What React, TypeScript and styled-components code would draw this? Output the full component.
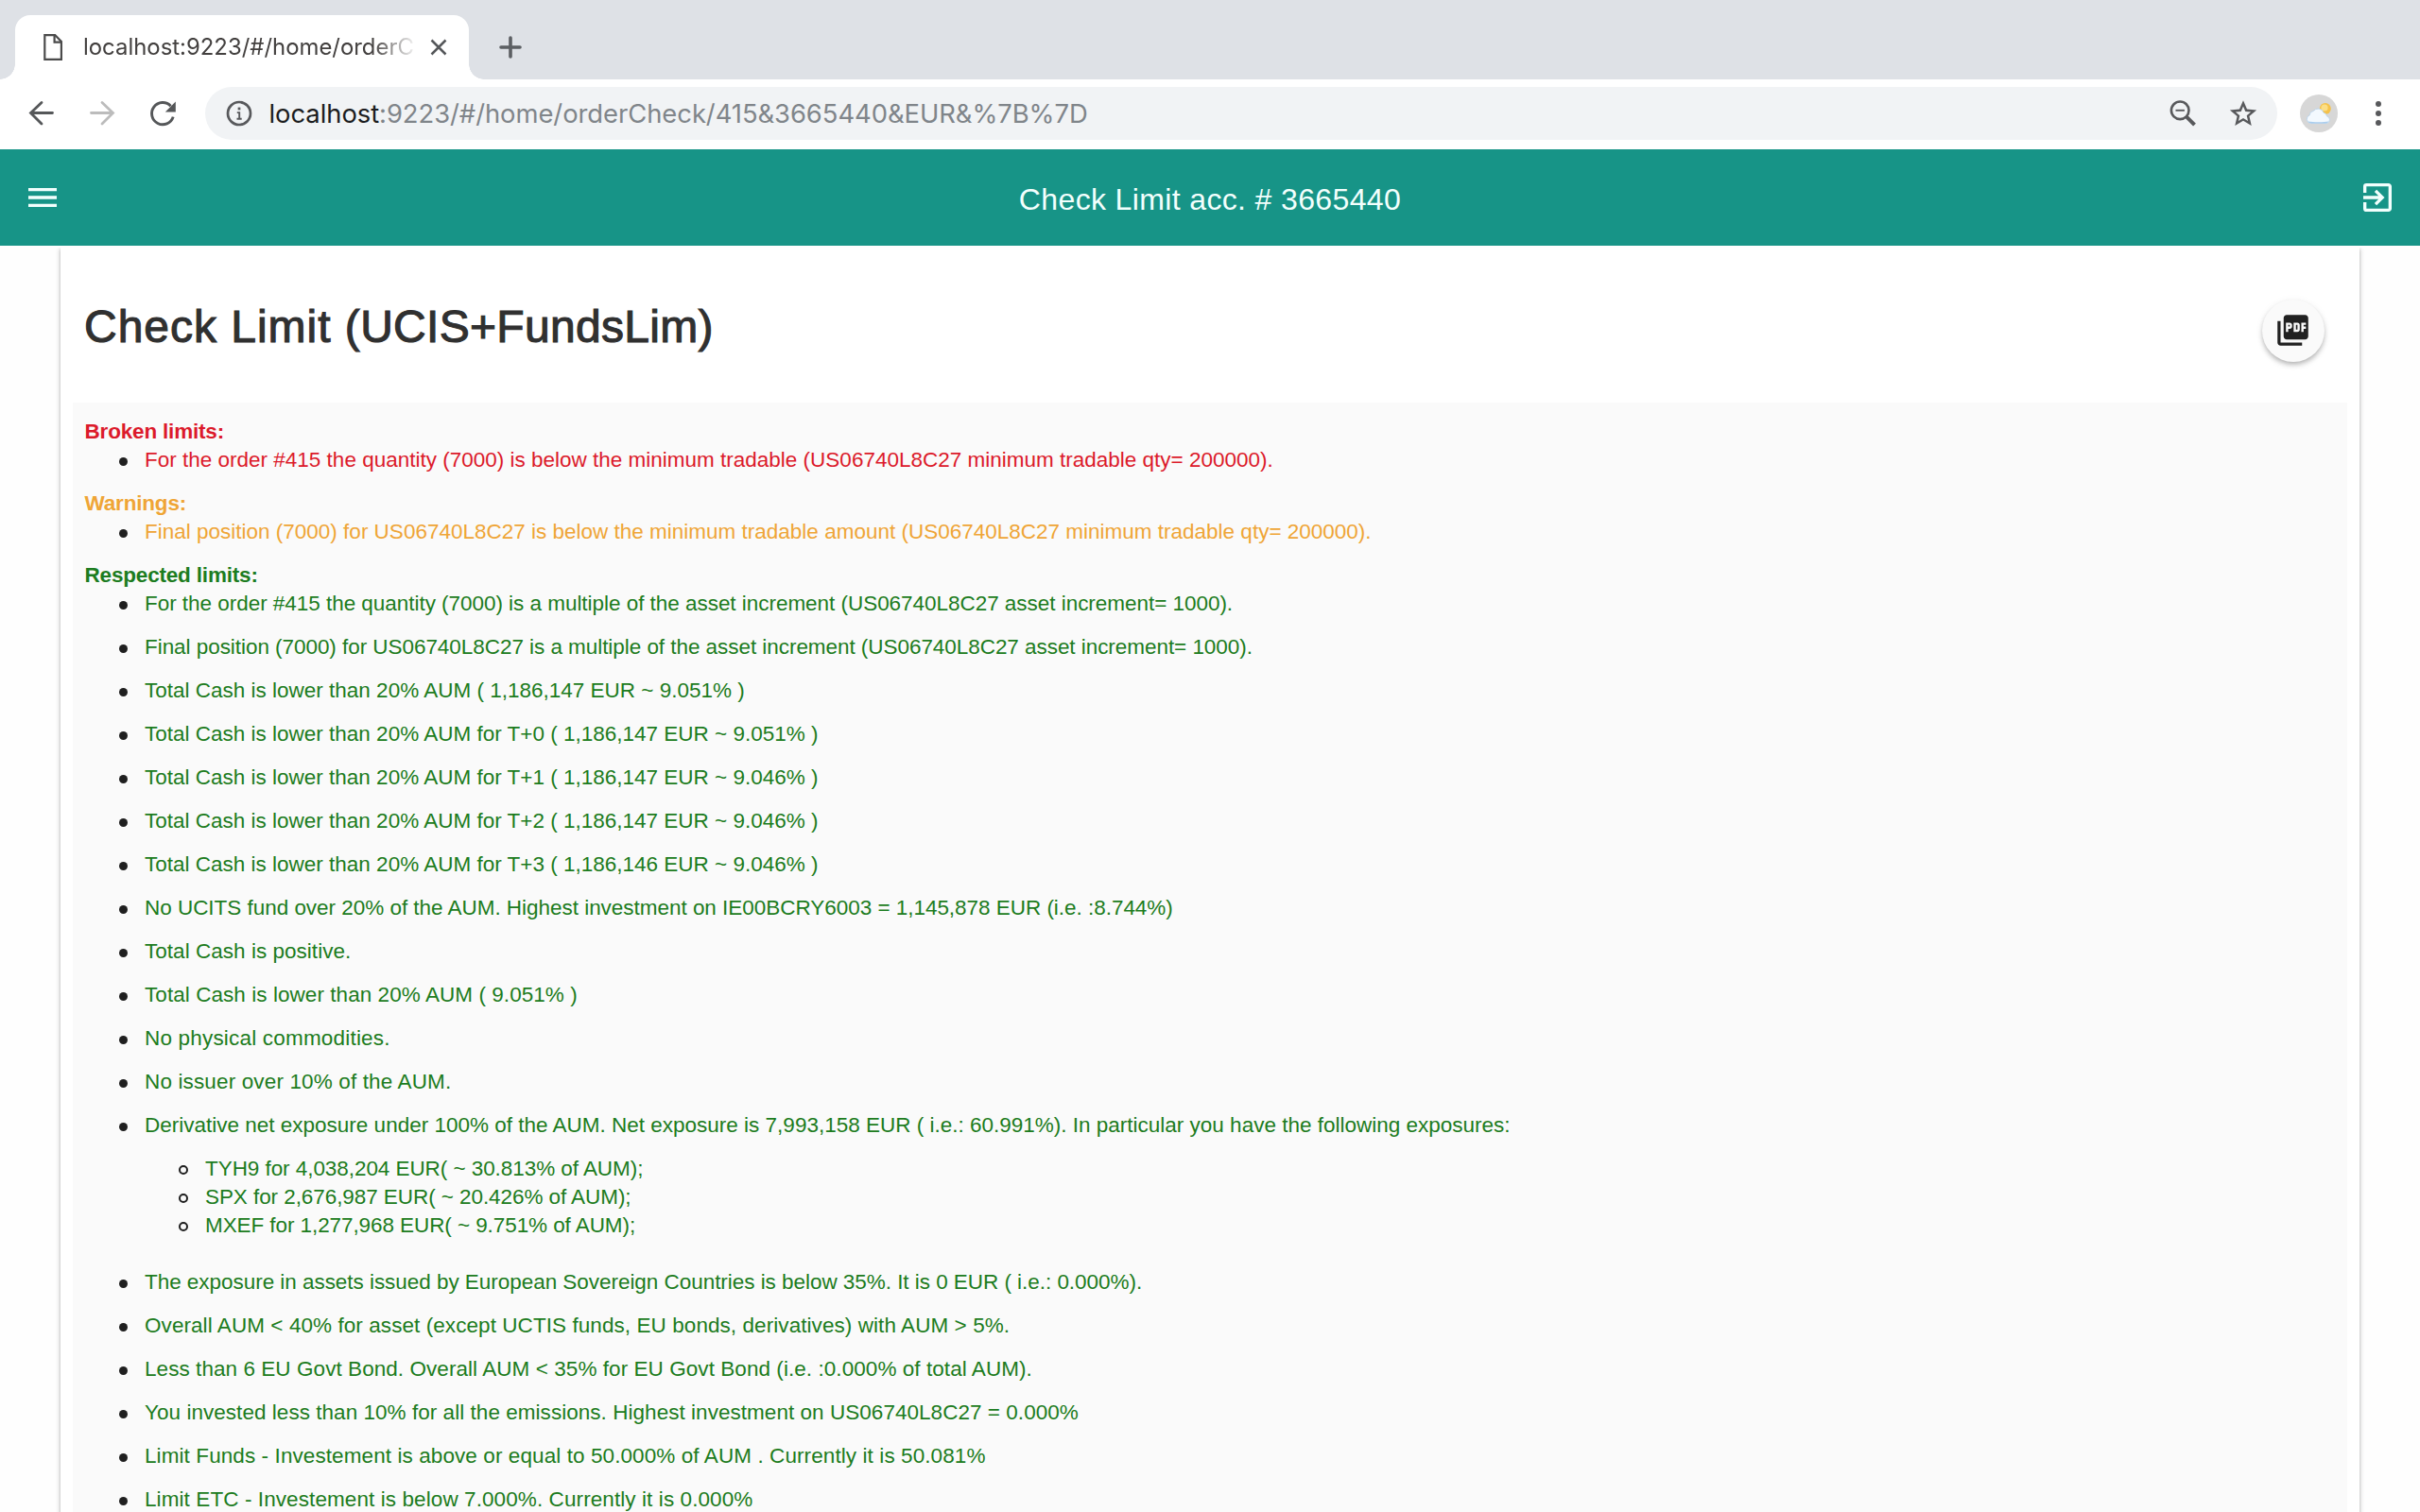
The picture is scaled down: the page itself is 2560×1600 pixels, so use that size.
import React from 'react';
import styled, { createGlobalStyle } from 'styled-components';
import { MdExitToApp, MdMenu, MdPictureAsPdf } from 'react-icons/md';

const GlobalStyle = createGlobalStyle`
  html, body { margin: 0; height: 1600px; overflow: hidden; background: #fff; }
  *, *::before, *::after { box-sizing: border-box; }
`;

const Page = styled.div`
  display: flex;
  flex-direction: column;
  width: 2560px;
  height: 1600px;
  overflow: hidden;
  background: #fefefe;
  font-family: 'Liberation Sans', Arial, sans-serif;
`;

const TabStrip = styled.div`
  flex: none;
  display: flex;
  height: 84px;
  padding: 16px 0 0 16px;
  background: #dee1e6;
`;

const Tab = styled.div`
  position: relative;
  display: flex;
  align-items: center;
  width: 480px;
  height: 68px;
  padding: 0 23px 0 29px;
  background: #fff;
  border-radius: 16px 16px 0 0;

  &::before,
  &::after {
    content: '';
    position: absolute;
    bottom: 0;
    width: 16px;
    height: 16px;
  }
  &::before {
    left: -16px;
    background: radial-gradient(circle at 0 0, transparent 15.5px, #fff 16px);
  }
  &::after {
    right: -16px;
    background: radial-gradient(circle at 100% 0, transparent 15.5px, #fff 16px);
  }
`;

const TabTitle = styled.span`
  width: 350px;
  margin-left: 21px;
  overflow: hidden;
  white-space: nowrap;
  font: 23.9px/32px Inter, sans-serif;
  color: #43403f;
  mask-image: linear-gradient(to right, #000 305px, transparent 354px);
`;

const TabClose = styled.svg`
  margin-left: 17px;
`;

const NewTab = styled.button`
  display: flex;
  align-items: center;
  margin: 0 0 0 30px;
  padding: 0;
  border: 0;
  background: none;
  color: #5c5f63;
`;

const Toolbar = styled.div`
  flex: none;
  display: flex;
  align-items: center;
  height: 73.5px;
  padding: 0 34px 2px 28px;
  background: #fff;
`;

const NavIcon = styled.svg<{ $dim?: boolean }>`
  flex: none;
  margin-right: 32px;
  color: ${(p) => (p.$dim ? '#bcbcbc' : '#555759')};
`;

const Omnibox = styled.div`
  display: flex;
  align-items: center;
  width: 2192px;
  height: 56px;
  margin-left: -3px;
  padding: 0 20px 0 20px;
  border-radius: 28px;
  background: #f1f3f5;
  color: #58595c;
`;

const Url = styled.span`
  flex: 1;
  margin-left: 15.5px;
  font: 27.4px/36px Inter, sans-serif;
  letter-spacing: -0.05px;
  color: #80858a;
`;

const UrlHost = styled.span`
  color: #1c1d20;
`;

const OmniAction = styled.svg`
  flex: none;
  margin-left: 32px;
`;

const Avatar = styled.div`
  display: flex;
  align-items: center;
  justify-content: center;
  flex: none;
  width: 40px;
  height: 40px;
  margin-left: 24px;
  border-radius: 50%;
  background: #d7d7d7;
`;

const Kebab = styled.div`
  display: flex;
  flex-direction: column;
  gap: 4px;
  margin-left: auto;
  padding-right: 7px;
`;

const Dot = styled.i`
  width: 6px;
  height: 6px;
  border-radius: 50%;
  background: #58595c;
`;

const AppBar = styled.header`
  flex: none;
  display: flex;
  align-items: center;
  justify-content: space-between;
  height: 102.5px;
  padding: 0 25px;
  background: #179487;
  color: #f2fffd;
`;

const AppTitle = styled.h2`
  margin: 6px 0 0;
  font-size: 32px;
  font-weight: 400;
  letter-spacing: 0.36px;
`;

const Card = styled.main`
  flex: 1;
  min-height: 0;
  margin: 2px 64px -20px;
  padding: 0 13px;
  background: #fff;
  box-shadow: 0 3px 1px -2px rgba(0, 0, 0, 0.2), 0 2px 2px rgba(0, 0, 0, 0.14),
    0 1px 5px rgba(0, 0, 0, 0.28);
  clip-path: inset(0 -10px -10px -10px);
`;

const CardHead = styled.div`
  display: flex;
  align-items: center;
  justify-content: space-between;
  height: 164px;
  padding: 0 24px 0 12px;
`;

const Title = styled.h1`
  margin: 3px 0 0;
  font-size: 48px;
  line-height: 60px;
  font-weight: 400;
  letter-spacing: 0.98px;
  color: #303030;
  -webkit-text-stroke: 1.1px #303030;
`;

const TitleScope = styled.span`
  letter-spacing: 0.3px;
`;

const PdfButton = styled.button`
  display: flex;
  align-items: center;
  justify-content: center;
  width: 66px;
  height: 66px;
  margin-top: 11px;
  padding: 0 1px 1px 0;
  border: 0;
  border-radius: 50%;
  background: #fafafa;
  color: #212121;
  box-shadow: 0 3px 5px -1px rgba(0, 0, 0, 0.2), 0 4px 6px rgba(0, 0, 0, 0.1),
    0 1px 8px rgba(0, 0, 0, 0.06);
`;

const Report = styled.section`
  height: 1300px;
  padding: 16px 12.5px 0;
  background: #fafafa;
  font-size: 22.5px;
  line-height: 30px;
  color: #1f1f1f;
`;

type Tone = 'broken' | 'warning' | 'ok';
const tones: Record<Tone, string> = { broken: '#dc1a2b', warning: '#efa536', ok: '#1c7c20' };

const GroupTitle = styled.div<{ $tone: Tone }>`
  font-weight: 700;
  letter-spacing: -0.18px;
  color: ${(p) => tones[p.$tone]};
`;

const Rules = styled.ul`
  margin: 0;
  padding: 0 0 0 63.500px;
  list-style: none;
`;

const Rule = styled.li`
  padding-bottom: 16px;

  &::before {
    content: '';
    display: inline-block;
    width: 9px;
    height: 9px;
    margin: 0 18.5px 0 -27.5px;
    vertical-align: 1px;
    border-radius: 50%;
    background: #1f1f1f;
  }
`;

const RuleText = styled.span<{ $tone: Tone; $track?: number }>`
  color: ${(p) => tones[p.$tone]};
  letter-spacing: ${(p) => p.$track ?? 0}px;
  white-space: pre;
`;

const SubRules = styled.ul`
  margin: 0;
  padding: 16px 0 14px 64px;
  list-style: none;
`;

const SubRule = styled.li`
  height: 30px;

  &::before {
    content: '';
    display: inline-block;
    width: 10px;
    height: 10px;
    margin: 0 18px 0 -28px;
    vertical-align: 1px;
    border: 2.2px solid #1f1f1f;
    border-radius: 50%;
  }
`;

interface Item { text: string; track?: number; sub?: Item[] }
interface Group { title: string; tone: Tone; items: Item[] }

const groups: Group[] = [
  {
    title: 'Broken limits:',
    tone: 'broken',
    items: [{ text: 'For the order #415 the quantity (7000) is below the minimum tradable (US06740L8C27 minimum tradable qty= 200000).' }],
  },
  {
    title: 'Warnings:',
    tone: 'warning',
    items: [{ text: 'Final position (7000) for US06740L8C27 is below the minimum tradable amount (US06740L8C27 minimum tradable qty= 200000).' }],
  },
  {
    title: 'Respected limits:',
    tone: 'ok',
    items: [
      { text: 'For the order #415 the quantity (7000) is a multiple of the asset increment (US06740L8C27 asset increment= 1000).', track: -0.035 },
      { text: 'Final position (7000) for US06740L8C27 is a multiple of the asset increment (US06740L8C27 asset increment= 1000).', track: -0.05 },
      { text: 'Total Cash is lower than 20% AUM ( 1,186,147 EUR ~ 9.051% )' },
      { text: 'Total Cash is lower than 20% AUM for T+0 ( 1,186,147 EUR ~ 9.051% )' },
      { text: 'Total Cash is lower than 20% AUM for T+1 ( 1,186,147 EUR ~ 9.046% )' },
      { text: 'Total Cash is lower than 20% AUM for T+2 ( 1,186,147 EUR ~ 9.046% )' },
      { text: 'Total Cash is lower than 20% AUM for T+3 ( 1,186,146 EUR ~ 9.046% )' },
      { text: 'No UCITS fund over 20% of the AUM. Highest investment on IE00BCRY6003 = 1,145,878 EUR (i.e. :8.744%)', track: -0.03 },
      { text: 'Total Cash is positive.', track: 0.03 },
      { text: 'Total Cash is lower than 20% AUM ( 9.051% )', track: 0.06 },
      { text: 'No physical commodities.', track: 0.19 },
      { text: 'No issuer over 10% of the AUM.', track: 0.14 },
      {
        text: 'Derivative net exposure under 100% of the AUM. Net exposure is 7,993,158 EUR ( i.e.: 60.991%). In particular you have the following exposures:',
        sub: [
          { text: 'TYH9 for 4,038,204 EUR( ~ 30.813% of AUM);', track: -0.06 },
          { text: 'SPX for 2,676,987 EUR( ~ 20.426% of AUM);', track: -0.07 },
          { text: 'MXEF for 1,277,968 EUR( ~ 9.751% of AUM);', track: -0.08 },
        ],
      },
      { text: 'The exposure in assets issued by European Sovereign Countries is below 35%. It is 0 EUR ( i.e.: 0.000%).', track: -0.04 },
      { text: 'Overall AUM < 40% for asset (except UCTIS funds, EU bonds, derivatives) with AUM > 5%.', track: 0.07 },
      { text: 'Less than 6 EU Govt Bond. Overall AUM < 35% for EU Govt Bond (i.e. :0.000% of total AUM).', track: 0.06 },
      { text: 'You invested less than 10% for all the emissions. Highest investment on US06740L8C27 = 0.000%', track: 0.04 },
      { text: 'Limit Funds - Investement is above or equal to 50.000% of AUM . Currently it is 50.081%', track: 0.09 },
      { text: 'Limit ETC - Investement is below 7.000%. Currently it is 0.000%', track: 0.09 },
    ],
  },
];

const WeatherIcon = () => (
  <svg width="28" height="24" viewBox="0 0 28 24">
    <circle cx="20.800" cy="7" r="6" fill="#f5c24a" />
    <circle cx="20" cy="6" r="3.600" fill="#fbde86" />
    <path
      d="M5.200 22.400a4.400 4.400 0 0 1-1-8.500 4.600 4.600 0 0 1 4-4.400 6.200 6.200 0 0 1 10.800 1.700 4.800 4.800 0 0 1 3.600 3.900 3.800 3.800 0 0 1 .2 7.300z"
      fill="#f3f9fe"
      stroke="#b3cfe8"
      strokeWidth=".8"
    />
    <path d="M2.500 20.600c1 1.600 2 1.800 4 1.800h13.500c2.400 0 3.800-.4 4.400-1.800-5 .9-16 .9-21.900 0z" fill="#a9cdee" />
  </svg>
);

export default function App() {
  return (
    <Page>
      <GlobalStyle />
      <TabStrip>
        <Tab>
          <svg width="22" height="30" viewBox="0 0 22 30" fill="none" stroke="#4b4b4b" strokeWidth="2.2">
            <path d="M2.300 2.100H13.200L19.900 9V27.900H2.300Z" />
            <path d="M12.600 2.400V9.700H19.600" />
          </svg>
          <TabTitle>localhost:9223/#/home/orderC</TabTitle>
          <TabClose width="18" height="18" viewBox="0 0 18 18" stroke="#55575a" strokeWidth="2.500">
            <path d="M1.500 1.500 16.500 16.500M16.500 1.500 1.500 16.500" />
          </TabClose>
        </Tab>
        <NewTab aria-label="New tab">
          <svg width="28" height="28" viewBox="0 0 28 28" stroke="currentColor" strokeWidth="3.600" strokeLinecap="round">
            <path d="M14 4v20M4 14h20" />
          </svg>
        </NewTab>
      </TabStrip>

      <Toolbar>
        <NavIcon width="32" height="32" viewBox="0 0 32 32" fill="none" stroke="currentColor" strokeWidth="2.800" strokeLinecap="round">
          <path d="M27.500 15.500H5M16 4.500 4.500 15.500 16 27" />
        </NavIcon>
        <NavIcon $dim width="32" height="32" viewBox="0 0 32 32" fill="none" stroke="currentColor" strokeWidth="2.800" strokeLinecap="round">
          <path d="M4.500 15.500H27M16 4.500 27.500 15.500 16 27" />
        </NavIcon>
        <NavIcon width="32" height="32" viewBox="0 0 32 32" fill="none" stroke="currentColor" strokeWidth="2.900">
          <path d="M27.200 19.600A11.600 11.600 0 1 1 24.600 8.200" />
          <path d="M29.800 3.500v11h-11z" fill="currentColor" stroke="none" />
        </NavIcon>
        <Omnibox>
          <svg width="32" height="32" viewBox="0 0 32 32" fill="none" stroke="currentColor" strokeWidth="2.700">
            <circle cx="16" cy="16" r="12" />
            <path d="M13.800 15.100H16.200V21.800M13.500 21.800H18.700" strokeWidth="1.900" />
            <path d="M16 9.600v2.800" />
          </svg>
          <Url>
            <UrlHost>localhost</UrlHost>:9223/#/home/orderCheck/415&amp;3665440&amp;EUR&amp;%7B%7D
          </Url>
          <OmniAction width="32" height="32" viewBox="0 0 32 32" fill="none" stroke="currentColor" strokeWidth="2.600">
            <circle cx="13.200" cy="12.800" r="9.300" />
            <path d="M8.500 12.800h9.400" strokeWidth="1.900" />
            <path d="M19.800 19.400 28.500 28.100" strokeWidth="4" />
          </OmniAction>
          <OmniAction width="32" height="32" viewBox="0 0 24 24" fill="currentColor">
            <path d="M22.600 9.300l-7.600-.65L12 1.600 9 8.660l-7.600.64 5.770 5L5.440 21.740 12 17.800l6.560 3.950-1.730-7.450 5.770-5zM12 15.700l-3.760 2.270 1-4.280-3.320-2.880 4.380-.38L12 6.400l1.710 4.040 4.380.38-3.320 2.880 1 4.280L12 15.700z" />
          </OmniAction>
        </Omnibox>
        <Avatar>
          <WeatherIcon />
        </Avatar>
        <Kebab>
          <Dot />
          <Dot />
          <Dot />
        </Kebab>
      </Toolbar>

      <AppBar>
        <MdMenu size={40} />
        <AppTitle>Check Limit acc. # 3665440</AppTitle>
        <MdExitToApp size={40} />
      </AppBar>

      <Card>
        <CardHead>
          <Title>
            Check Limit <TitleScope>(UCIS+FundsLim)</TitleScope>
          </Title>
          <PdfButton aria-label="Export to PDF">
            <MdPictureAsPdf size={39} />
          </PdfButton>
        </CardHead>
        <Report>
          {groups.map((g) => (
            <React.Fragment key={g.title}>
              <GroupTitle $tone={g.tone}>{g.title}</GroupTitle>
              <Rules>
                {g.items.map((it) => (
                  <Rule key={it.text}>
                    <RuleText $tone={g.tone} $track={it.track}>{it.text}</RuleText>
                    {it.sub && (
                      <SubRules>
                        {it.sub.map((s) => (
                          <SubRule key={s.text}>
                            <RuleText $tone={g.tone} $track={s.track}>{s.text}</RuleText>
                          </SubRule>
                        ))}
                      </SubRules>
                    )}
                  </Rule>
                ))}
              </Rules>
            </React.Fragment>
          ))}
        </Report>
      </Card>
    </Page>
  );
}
